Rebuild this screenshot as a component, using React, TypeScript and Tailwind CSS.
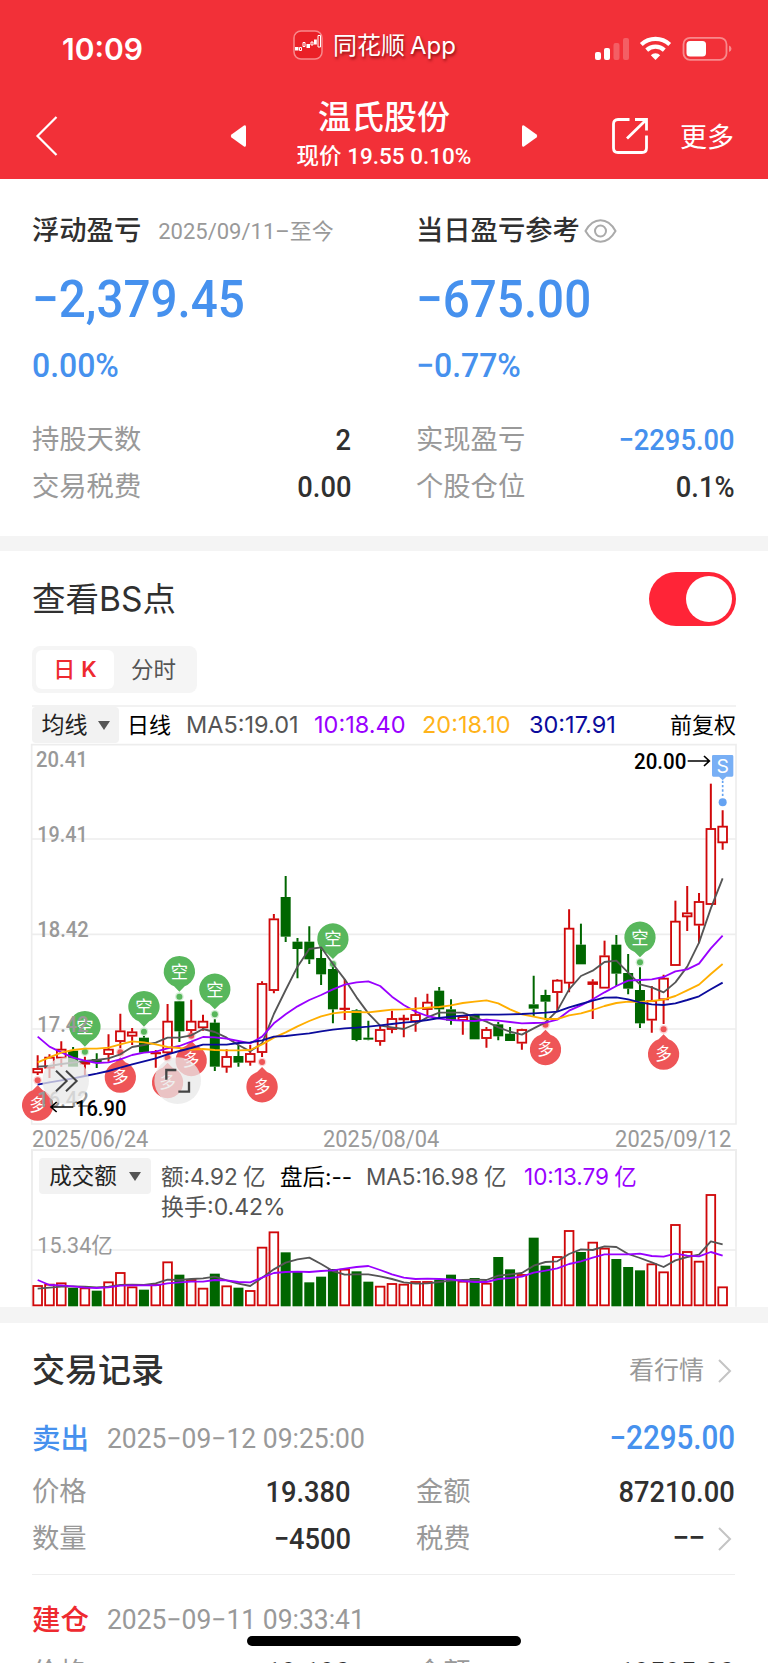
import React from 'react';

type Candle = [string, number, number, number, number];

// kind, high, body top, body bottom, low
const candles: Candle[] = [
  ['R', 946, 985, 999, 1005], ['R', 943, 951, 985, 1014], ['R', 904, 927, 955, 980], ['G', 921, 932, 980, 980],
  ['R', 950, 965, 973, 1006], ['G', 940, 957, 968, 984], ['R', 883, 927, 944, 965], ['R', 821, 872, 905, 925],
  ['R', 864, 875, 889, 915], ['G', 888, 893, 938, 938], ['R', 930, 937, 942, 983], ['R', 792, 843, 939, 945],
  ['G', 783, 784, 874, 906], ['R', 779, 843, 872, 885], ['R', 824, 843, 864, 872], ['G', 838, 848, 980, 993],
  ['R', 928, 949, 982, 998], ['G', 915, 948, 968, 980], ['R', 915, 940, 967, 977], ['R', 724, 730, 938, 951],
  ['R', 522, 536, 752, 760], ['G', 408, 471, 590, 606], ['G', 594, 605, 627, 715], ['G', 559, 605, 658, 672],
  ['G', 624, 654, 703, 735], ['G', 680, 687, 808, 850], ['R', 717, 804, 809, 840], ['G', 808, 811, 900, 904],
  ['G', 842, 893, 899, 901], ['R', 856, 868, 905, 917], ['R', 812, 835, 869, 880], ['R', 824, 834, 840, 892],
  ['R', 772, 823, 845, 875], ['R', 761, 786, 809, 825], ['G', 741, 752, 808, 835], ['G', 778, 808, 842, 854],
  ['R', 825, 829, 842, 884], ['G', 825, 825, 898, 898], ['R', 861, 868, 896, 923], ['G', 846, 853, 889, 901],
  ['G', 861, 881, 903, 903], ['R', 866, 868, 910, 929], ['G', 707, 793, 806, 829], ['G', 749, 765, 785, 840],
  ['R', 718, 720, 758, 815], ['R', 508, 564, 730, 757], ['G', 551, 614, 673, 673], ['R', 718, 725, 734, 837],
  ['R', 602, 647, 745, 745], ['G', 585, 614, 701, 738], ['G', 642, 699, 746, 763], ['G', 682, 750, 850, 864],
  ['R', 738, 781, 841, 878], ['R', 704, 714, 780, 852], ['R', 482, 543, 677, 677], ['R', 438, 518, 531, 573],
  ['R', 459, 484, 556, 610], ['R', 131, 265, 494, 494], ['R', 211, 258, 309, 329],
];

const ma5 = [980, 978, 972, 968, 963, 960, 955, 943, 921, 915, 908, 893, 893, 886, 867, 876, 893, 915, 934, 910, 822, 750, 680, 627, 622, 672, 718, 772, 820, 857, 862, 867, 852, 832, 818, 818, 818, 832, 845, 862, 875, 884, 865, 847, 812, 748, 708, 692, 666, 662, 698, 733, 742, 757, 727, 680, 608, 505, 415];
const ma10 = [890, 920, 937, 953, 962, 969, 967, 958, 945, 938, 935, 925, 918, 905, 891, 892, 896, 903, 910, 890, 850, 823, 799, 780, 765, 748, 734, 727, 724, 738, 770, 795, 815, 828, 836, 840, 842, 843, 839, 842, 846, 850, 849, 848, 839, 812, 796, 778, 757, 738, 722, 720, 718, 711, 694, 688, 671, 625, 587];
const ma20 = [967, 952, 938, 930, 926, 926, 923, 913, 904, 907, 913, 921, 924, 929, 927, 930, 931, 931, 930, 913, 893, 877, 859, 843, 829, 820, 816, 816, 817, 813, 809, 808, 806, 803, 801, 796, 789, 785, 781, 790, 808, 823, 830, 837, 837, 826, 820, 810, 798, 789, 785, 786, 783, 779, 768, 751, 734, 702, 672];
const ma30 = [1034, 1027, 1021, 1015, 1008, 1001, 993, 983, 973, 964, 955, 943, 933, 924, 914, 914, 914, 909, 907, 901, 890, 888, 884, 880, 874, 869, 865, 863, 860, 856, 852, 848, 845, 840, 834, 830, 827, 824, 824, 824, 823, 822, 820, 818, 815, 802, 792, 782, 773, 772, 778, 787, 793, 795, 790, 780, 769, 748, 728];

const volumes = [498, 494, 490, 504, 505, 512, 487, 459, 502, 509, 495, 427, 464, 480, 506, 461, 499, 503, 513, 383, 337, 397, 456, 487, 470, 447, 449, 454, 485, 500, 492, 494, 486, 486, 479, 464, 485, 474, 491, 411, 448, 465, 353, 437, 411, 333, 396, 368, 386, 417, 441, 451, 433, 457, 315, 396, 425, 225, 502];
const volRed = 'RRRGRGRRRGRRGRRGRGRRRGGGGGRGGRRRRRGGRGRGGRGGRRGRRGGGRRRRRRR'.split('');
const vol5 = [506, 503, 500, 499, 500, 502, 500, 495, 494, 495, 490, 479, 480, 477, 475, 470, 481, 491, 498, 473, 448, 428, 418, 413, 432, 453, 464, 463, 463, 469, 477, 487, 491, 490, 486, 482, 480, 479, 480, 467, 463, 459, 437, 426, 424, 402, 388, 390, 379, 381, 402, 414, 427, 441, 421, 411, 404, 364, 373];
const vol10 = [480, 495, 496, 499, 503, 504, 502, 497, 496, 496, 496, 490, 487, 485, 485, 480, 481, 486, 487, 473, 459, 456, 455, 456, 453, 451, 446, 441, 438, 450, 463, 473, 477, 476, 477, 478, 483, 486, 486, 477, 474, 470, 458, 452, 445, 432, 424, 413, 403, 403, 403, 401, 408, 410, 401, 407, 409, 396, 407];

const shortMarks: [number, number][] = [[4, 860], [9, 800], [12, 695], [15, 748], [25, 597], [51, 592]];
const longMarks: [number, number][] = [[0, 1095], [7, 1011], [11, 1027], [13, 961], [19, 1040], [43, 928], [53, 942]];

const RED = '#d0080a';
const GREEN = '#006600';
const xAt = (i: number) => 113 + i * 35.43;
const toPoints = (values: number[]) => values.map((y, i) => `${xAt(i).toFixed(1)},${y}`).join(' ');

const Line = ({ values, color }: { values: number[]; color: string }) => (
  <polyline points={toPoints(values)} fill="none" stroke={color} strokeWidth="5.5" strokeLinejoin="round" />
);

const svgFont = "Roboto, 'Noto Sans CJK SC', sans-serif";

const Label = ({ x, y, w, children, color = '#999999', size = 68, weight = 500 }: {
  x: number; y: number; w: number; children: string; color?: string; size?: number; weight?: number;
}) => (
  <text x={x} y={y} fontSize={size} fontWeight={weight} fill={color} fontFamily={svgFont} textLength={w} lengthAdjust="spacingAndGlyphs">
    {children}
  </text>
);

const KLine = () => (
  <svg className="block h-[383px] w-[768px] shrink-0" viewBox="0 9 2304 1149">
    <path d="M95 14H2208V1152H95ZM95 297H2208M95 583H2208M95 867H2208" fill="none" stroke="#ededed" strokeWidth="5" />
    {candles.map(([kind, high, top, bottom, low], i) => {
      const x = xAt(i);
      const color = kind === 'R' ? RED : GREEN;
      return (
        <g key={i}>
          <path d={`M${x} ${high}V${top}M${x} ${bottom}V${low}`} stroke={color} strokeWidth="6" />
          {kind === 'R' ? (
            <rect x={x - 13} y={top + 2} width="26" height={Math.max(bottom - top - 4, 1)} fill="#fff" stroke={color} strokeWidth="5.5" />
          ) : (
            <rect x={x - 15} y={top} width="30" height={bottom - top} fill={color} />
          )}
        </g>
      );
    })}
    {longMarks.map(([i, y]) => (
      <g key={i} transform={`translate(${xAt(i)} ${y})`}>
        <circle cy="-74" r="13" fill="#ee5557" opacity="0.25" />
        <circle cy="-74" r="9" fill="#ee5557" />
        <path d="M0 -59L15 -44A47 47 0 1 1 -15 -44Z" fill="#ee5557" />
        <text y="18" fontSize="50" fill="#fff" textAnchor="middle" fontFamily={svgFont}>多</text>
      </g>
    ))}
    {shortMarks.map(([i, y]) => (
      <g key={i} transform={`translate(${xAt(i)} ${y})`}>
        <circle cy="75" r="13" fill="#58b75c" opacity="0.25" />
        <circle cy="75" r="9" fill="#58b75c" />
        <path d="M0 60L16 44A47 47 0 1 0 -16 44Z" fill="#58b75c" />
        <text y="19" fontSize="52" fill="#fff" textAnchor="middle" fontFamily={svgFont}>空</text>
      </g>
    ))}
    <Line values={ma5} color="#555555" />
    <Line values={ma10} color="#9900ff" />
    <Line values={ma20} color="#ffae00" />
    <Line values={ma30} color="#0b0b9c" />
    <Label x={108} y={82} w={155}>20.41</Label>
    <Label x={112} y={307} w={151}>19.41</Label>
    <Label x={112} y={592} w={154}>18.42</Label>
    <Label x={112} y={877} w={154}>17.42</Label>
    <Label x={112} y={1101} w={154}>16.42</Label>

    {/* expand / fullscreen buttons */}
    <circle cx="197" cy="1022" r="70" fill="#e8e8e8" opacity="0.75" />
    <path d="M168 992L200 1023L168 1054M198 992L230 1023L198 1054" fill="none" stroke="#444" strokeWidth="6" />
    <circle cx="533" cy="1022" r="70" fill="#e8e8e8" opacity="0.75" />
    <path d="M499 1019V990H529M567 1025V1055H535" fill="none" stroke="#444" strokeWidth="7" />

    <path d="M220 1101H153M170 1086L153 1101L170 1116" fill="none" stroke="#000" strokeWidth="5" />
    <Label x={225} y={1128} w={154} color="#000">16.90</Label>
    <Label x={1902} y={88} w={157} color="#000">20.00</Label>
    <path d="M2063 63H2128M2112 48L2128 63L2112 78" fill="none" stroke="#000" strokeWidth="5" />

    {/* sell point */}
    <path d="M2140 45H2196Q2200 45 2200 49V106Q2200 110 2196 110H2179L2168 121L2157 110H2140Q2136 110 2136 106V49Q2136 45 2140 45Z" fill="#78aff5" />
    <text x="2168" y="100" fontSize="58" fill="#fff" textAnchor="middle" fontFamily="Inter, sans-serif">S</text>
    <path d="M2168 122V168" stroke="#65a3f2" strokeWidth="5" strokeDasharray="7 6" />
    <circle cx="2168" cy="187" r="12" fill="#65a3f2" />
  </svg>
);

const VolumeChart = () => (
  <svg className="block h-[87px] w-[768px] shrink-0 overflow-visible" viewBox="0 300 2304 261">
    <path d="M95 300V560M2208 300V560M95 390H2208" fill="none" stroke="#ededed" strokeWidth="5" />
    <Label x={112} y={400} w={226} size={66} weight={400}>15.34亿</Label>
    {volumes.map((top, i) => {
      const x = xAt(i);
      return volRed[i] === 'R' ? (
        <rect key={i} x={x - 13} y={top} width="26" height={556 - top} fill="#fff" stroke={RED} strokeWidth="5.5" />
      ) : (
        <rect key={i} x={x - 15} y={top} width="30" height={559 - top} fill={GREEN} />
      );
    })}
    <Line values={vol5} color="#555555" />
    <Line values={vol10} color="#9900ff" />
  </svg>
);

const Num = ({ className = '', children }: { className?: string; children: React.ReactNode }) => (
  <span className={`inline-block whitespace-nowrap font-['Roboto','Noto_Sans_CJK_SC',sans-serif] ${className}`}>{children}</span>
);

const Row = ({ label, value, blue }: { label: string; value: string; blue?: boolean }) => (
  <div className="flex items-center justify-between">
    <span className="pt-[2px] text-[27.300px] text-[#999]">{label}</span>
    <Num className={`origin-right scale-x-[0.91] pb-[1px] text-[30px] font-medium ${blue ? 'text-[#4691ee]' : 'text-[#303030]'}`}>{value}</Num>
  </div>
);

const Chevron = () => (
  <svg className="h-[24px] w-[14px]" viewBox="0 0 14 24" fill="none" stroke="#c4c4c4" strokeWidth="2">
    <path d="M1 1L12 12L1 23" />
  </svg>
);

const Caret = () => (
  <svg className="h-[9px] w-[12px]" viewBox="0 0 12 9"><path d="M0 0H12L6 9Z" fill="#555" /></svg>
);

const Header = () => (
  <header className="h-[179px] bg-[#f23038] text-white">
    <div className="flex h-[90px] items-center pl-[62px] pt-[8px]">
      <span className="w-[231px] text-[30px] font-semibold leading-none">10:09</span>
      <div className="-mt-[8px] flex w-[302px] items-center gap-[10px]">
        <svg className="h-[30px] w-[30px]" viewBox="0 0 30 30">
          <rect x="1" y="1" width="28" height="28" rx="7" fill="#ea2027" stroke="#f8898c" strokeWidth="1.5" />
          <path d="M2 17h3.500v3.500H2zM13.500 14h3.500v4h-3.500zM21 9.500h2.800v5H21z" fill="#fff" />
          <path d="M6.500 17.500h2v3h-2zM10 12.500h2v4h-2zM18 12h2v3h-2zM25 5.500h2.500v11.500h-2.500z" fill="none" stroke="#fff" strokeWidth="1" />
        </svg>
        <div className="flex gap-[5px] whitespace-nowrap pt-[1px] text-[24px] leading-none [text-shadow:1px_2px_3px_rgba(90,0,0,0.7)]">
          <span>同花顺</span><span>App</span>
        </div>
      </div>
      <svg className="h-[26px] w-[138px] -translate-y-px" viewBox="0 0 138 26" fill="#fff">
        <rect x="0" y="17" width="6" height="8" rx="2" />
        <rect x="9" y="13" width="6" height="12" rx="2" />
        <g opacity="0.22">
          <rect x="18.500" y="8" width="6" height="17" rx="2" />
          <rect x="28" y="3" width="6" height="22" rx="2" />
        </g>
        <g fill="none" stroke="#fff" strokeWidth="4.200">
          <path d="M46.300 9.500a21 21 0 0 1 28.400 0" />
          <path d="M51.700 15.100a13 13 0 0 1 17.600 0" />
        </g>
        <path d="M60.500 25L55.800 20.200a6.600 6.600 0 0 1 9.400 0Z" />
        <rect x="88.500" y="2.800" width="43" height="22" rx="6.500" fill="none" stroke="#f8898c" strokeWidth="1.800" />
        <rect x="91.500" y="6" width="19.500" height="15.600" rx="3.500" />
        <path d="M134 10.500q2.500 1 2.500 3.300t-2.500 3.300Z" fill="#f8898c" />
      </svg>
    </div>
    <div className="flex h-[89px] items-center pl-[35px] pr-[34px]">
      <svg className="mt-[3px] h-[42px] w-[24px]" viewBox="0 0 24 42" fill="none" stroke="#fff" strokeWidth="2.200">
        <path d="M21.500 2L2.500 21L21.500 40" />
      </svg>
      <svg className="ml-[171px] mt-[3px] h-[24px] w-[17px]" viewBox="0 0 17 24" fill="#fff">
        <path d="M14 1.500Q16 0.500 16 3V21Q16 23.500 14 22.500L1.500 13.500Q0 12 1.500 10.500Z" />
      </svg>
      <div className="flex w-[274px] flex-col items-center pt-[4px]">
        <span className="text-[33px] font-medium leading-[39px]">温氏股份</span>
        <Num className="text-[22.500px] font-medium leading-[39px]">现价 19.55 0.10%</Num>
      </div>
      <svg className="mt-[3px] h-[24px] w-[17px]" viewBox="0 0 17 24" fill="#fff">
        <path d="M3 1.500Q1 0.500 1 3V21Q1 23.500 3 22.500L15.500 13.500Q17 12 15.500 10.500Z" />
      </svg>
      <svg className="ml-[73px] mt-[3px] h-[38px] w-[38px]" viewBox="0 0 38 38" fill="none" stroke="#fff" strokeWidth="2.800">
        <path d="M18.500 2.500H7Q2.500 2.500 2.500 7V31Q2.500 35.500 7 35.500H31Q35.500 35.500 35.500 31V18.500" />
        <path d="M24 2.500H35.500V13.500M35 3L16 21.500" />
      </svg>
      <span className="ml-auto pt-[5px] text-[27px] leading-none">更多</span>
    </div>
  </header>
);

const Summary = () => (
  <section className="grid h-[357px] grid-cols-[319px_319px] justify-between pl-[32px] pr-[33px] pt-[32px]">
    <div>
      <div className="flex h-[41px] items-center gap-[17px]">
        <span className="text-[27.300px] font-medium text-[#303030]">浮动盈亏</span>
        <Num className="text-[22px] text-[#999]">2025/09/11–至今</Num>
      </div>
      <Num className="mt-[18px] h-[60px] origin-left scale-x-[0.915] text-[52px] font-medium leading-[60px] text-[#4691ee]">−2,379.45</Num>
      <div className="mt-[17px] h-[36px]">
        <Num className="origin-left scale-x-[0.94] text-[34px] font-medium leading-[36px] text-[#4691ee]">0.00%</Num>
      </div>
      <div className="mt-[33px] grid grid-rows-[47px_47px]">
        <Row label="持股天数" value="2" />
        <Row label="交易税费" value="0.00" />
      </div>
    </div>
    <div>
      <div className="flex h-[41px] items-center gap-[4px]">
        <span className="text-[27.300px] font-medium text-[#303030]">当日盈亏参考</span>
        <svg className="-mt-[2px] h-[24px] w-[33px]" viewBox="0 0 33 24" fill="none" stroke="#aaa" strokeWidth="2">
          <path d="M1.500 12Q7.500 1.300 16.500 1.300T31.500 12Q25.500 22.700 16.500 22.700T1.500 12Z" />
          <circle cx="16.500" cy="12" r="5.500" />
        </svg>
      </div>
      <Num className="mt-[18px] h-[60px] origin-left scale-x-[0.915] text-[52px] font-medium leading-[60px] text-[#4691ee]">−675.00</Num>
      <div className="mt-[17px] h-[36px]">
        <Num className="origin-left scale-x-[0.94] text-[34px] font-medium leading-[36px] text-[#4691ee]">−0.77%</Num>
      </div>
      <div className="mt-[33px] grid grid-rows-[47px_47px]">
        <Row label="实现盈亏" value="−2295.00" blue />
        <Row label="个股仓位" value="0.1%" />
      </div>
    </div>
  </section>
);

const ChartSection = () => (
  <section className="flex h-[756px] flex-col pt-[1px]">
    <div className="flex h-[95px] items-center justify-between pl-[32px] pr-[32px]">
      <span className="text-[33.500px] text-[#303030]">查看BS点</span>
      <div className="flex h-[54px] w-[87px] items-center justify-end rounded-full bg-[#ff2437] p-[4px]">
        <div className="h-[46px] w-[46px] rounded-full bg-white"></div>
      </div>
    </div>
    <div className="ml-[32px] flex h-[47px] w-[165px] items-center rounded-lg bg-[#f5f5f5] p-[4px]">
      <div className="flex h-[39px] w-[78px] items-center justify-center gap-[6px] rounded-md bg-white text-[22px] font-medium text-[#ee2a30]">
        <span>日</span><span className="font-semibold">K</span>
      </div>
      <div className="flex-1 text-center text-[22.500px] text-[#555]">分时</div>
    </div>
    <div className="mx-[32px] mt-[12px] flex h-[38px] items-center border-t-[2px] border-[#f2f2f2] text-[23px] leading-none">
      <div className="flex h-[36px] w-[87px] items-center justify-center gap-[10px] rounded bg-[#f2f2f2] text-[#222]">
        <span>均线</span><Caret />
      </div>
      <span className="ml-[8px] w-[59px] text-[22px] text-black">日线</span>
      <span className="w-[128px] text-[23.500px] text-[#555]">MA5:19.01</span>
      <span className="w-[108px] text-[23.500px] text-[#9900ff]">10:18.40</span>
      <span className="w-[107px] text-[23.500px] text-[#ffb31a]">20:18.10</span>
      <span className="text-[23.500px] text-[#0b0b9c]">30:17.91</span>
      <span className="ml-auto text-[22px] text-black">前复权</span>
    </div>
    <KLine />
    <div className="mx-[32px] flex h-[23px] items-center justify-between pr-[5px] pt-[4px] text-[23px] leading-none text-[#999]">
      <Num className="origin-left scale-x-[0.95]">2025/06/24</Num>
      <Num className="scale-x-[0.95]">2025/08/04</Num>
      <Num className="origin-right scale-x-[0.95]">2025/09/12</Num>
    </div>
    <div className="mx-[31px] flex h-[71px] items-start border-x-[2px] border-t-[2px] border-[#ededed] pl-[6px] pt-[7px] text-[22.500px]">
      <div className="flex h-[36px] w-[112px] items-center justify-center gap-[12px] rounded bg-[#f2f2f2] text-[22.500px] text-[#222]">
        <span>成交额</span><Caret />
      </div>
      <div className="ml-[10px] whitespace-nowrap text-[#555] [word-spacing:-1px]">
        <div className="flex h-[32px] items-center pt-[6px]">
          <span className="w-[119px]">额:4.92 亿</span>
          <span className="w-[86px] text-black">盘后:--</span>
          <span className="w-[158px]">MA5:16.98 亿</span>
          <span className="text-[#9900ff]">10:13.79 亿</span>
        </div>
        <div className="flex h-[30px] items-center pt-[5px] text-[23px]">换手:0.42%</div>
      </div>
    </div>
    <VolumeChart />
  </section>
);

const TradeHead = ({ kind, time, color, amount }: { kind: string; time: string; color: string; amount?: string }) => (
  <div className="flex h-[54px] items-center">
    <span className={`w-[75px] pt-[2px] text-[28.500px] font-medium ${color}`}>{kind}</span>
    <Num className="origin-left scale-x-[0.98] pt-[2px] text-[27px] text-[#999]">{time}</Num>
    {amount && <Num className={`ml-auto origin-right scale-x-[0.91] text-[32.500px] font-medium ${color}`}>{amount}</Num>}
  </div>
);

const Trades = () => (
  <section className="pl-[32px] pr-[33px]">
    <div className="flex h-[88px] items-center justify-between pt-[8px]">
      <span className="text-[33px] font-medium text-[#303030]">交易记录</span>
      <div className="flex items-center gap-[14px] pr-[3px] text-[25px] text-[#999]">
        <span>看行情</span>
        <Chevron />
      </div>
    </div>
    <TradeHead kind="卖出" time="2025−09−12 09:25:00" color="text-[#4691ee]" amount="−2295.00" />
    <div className="mt-[3px] grid h-[94px] grid-cols-[319px_319px] grid-rows-[47px_47px] justify-between">
      <Row label="价格" value="19.380" />
      <Row label="金额" value="87210.00" />
      <Row label="数量" value="−4500" />
      <div className="flex items-center justify-between pr-[3px]">
        <span className="pt-[2px] text-[27.300px] text-[#999]">税费</span>
        <div className="flex items-center gap-[14px]">
          <Num className="pb-[2px] text-[30px] font-medium tracking-[-1px] text-[#303030]">−−</Num>
          <Chevron />
        </div>
      </div>
    </div>
    <div className="mt-[12px] mb-[17px] h-px bg-[#eee]"></div>
    <TradeHead kind="建仓" time="2025−09−11 09:33:41" color="text-[#ee2a30]" />
    <div className="mt-[3px] grid h-[47px] grid-cols-[319px_319px] justify-between">
      <Row label="价格" value="19.190" />
      <Row label="金额" value="19595.00" />
    </div>
  </section>
);

const App = () => {
  return (
    <main className="relative h-[1663px] w-[768px] overflow-hidden bg-white font-['Inter','Noto_Sans_CJK_SC',sans-serif]">
      <Header />
      <Summary />
      <div className="h-[15px] bg-[#f4f4f4]"></div>
      <ChartSection />
      <div className="h-[16px] bg-[#f4f4f4]"></div>
      <Trades />
      <div className="absolute bottom-[17px] left-[247px] h-[10px] w-[274px] rounded-full bg-black"></div>
    </main>
  );
};

export default App;
